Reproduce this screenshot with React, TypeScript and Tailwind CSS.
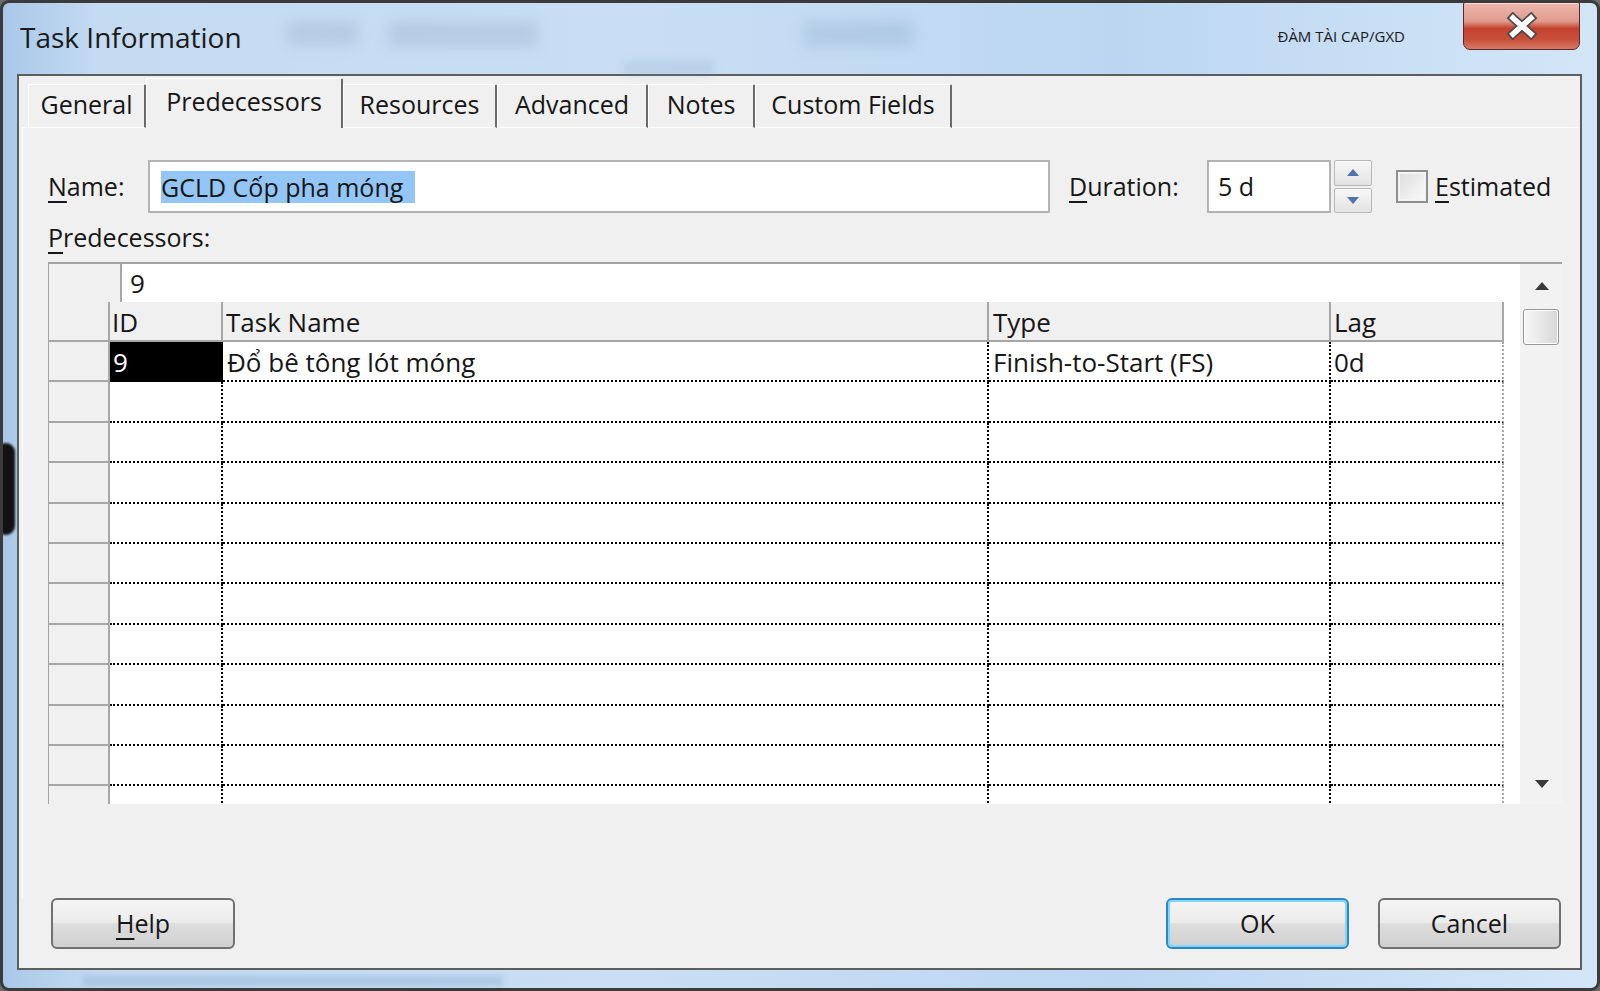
import React from 'react';

const tabs = [
  { label: 'General', cls: 'w-[118px]' },
  { label: 'Predecessors', cls: 'w-[197px]', selected: true },
  { label: 'Resources', cls: 'w-[154px]' },
  { label: 'Advanced', cls: 'w-[151px]' },
  { label: 'Notes', cls: 'w-[107px]' },
  { label: 'Custom Fields', cls: 'w-[197px]' },
];

const btnBg =
  'bg-[linear-gradient(to_bottom,#f4f4f4_0%,#ececec_48%,#dedede_50%,#d0d0d0_100%)]';

const Mn: React.FC<{ c: string }> = ({ c }) => (
  <span className="underline decoration-[2px] underline-offset-[5px]">{c}</span>
);

const Triangle: React.FC<{ up?: boolean; color: string; w?: number; h?: number }> = ({ up, color, w = 14, h = 8 }) => (
  <svg width={w} height={h} viewBox={`0 0 ${w} ${h}`}>
    <polygon points={up ? `0,${h} ${w / 2},0 ${w},${h}` : `0,0 ${w},0 ${w / 2},${h}`} fill={color} />
  </svg>
);

const DataRow: React.FC<{ id?: string; name?: string; type?: string; lag?: string }> = ({ id, name, type, lag }) => (
  <div className="flex h-[40.4px] shrink-0">
    <div className="w-[61px] bg-[#f0f0f0] border-r-2 border-b-2 border-[#a6a6a6]" />
    <div
      className={`w-[113px] pl-[3px] pt-[3px] flex items-center border-r-2 border-b-2 border-dotted border-black ${
        id ? 'bg-black text-white' : ''
      }`}
    >
      {id}
    </div>
    <div className="w-[766px] pl-[4px] pt-[3px] flex items-center border-r-2 border-b-2 border-dotted border-black">{name}</div>
    <div className="w-[342px] pl-[4px] pt-[3px] flex items-center border-r-2 border-b-2 border-dotted border-black">{type}</div>
    <div className="w-[173px] pl-[3px] pt-[3px] flex items-center border-b-2 border-dotted border-black border-r-2 border-r-[#a6a6a6] border-r-solid">
      {lag}
    </div>
  </div>
);

export default function App() {
  const emptyRows = Array.from({ length: 11 });
  return (
    <div className="w-[1600px] h-[991px] bg-[#6b6b6b] font-['Open_Sans',sans-serif] text-[#161616] overflow-hidden">
      <div className="relative w-full h-full rounded-[9px] border-[3px] border-[#3b3b3b] bg-[linear-gradient(to_right,#a9c8e8_0%,#c4dbf2_6%,#c9def4_40%,#bcd6f1_70%,#d3e6f8_100%)] flex flex-col overflow-hidden">
        {/* glass blur behind the title */}
        <div className="absolute left-[285px] top-[18px] w-[70px] h-[24px] bg-[#7f9bb8] opacity-25 blur-[7px]" />
        <div className="absolute left-[385px] top-[18px] w-[150px] h-[26px] bg-[#7f9bb8] opacity-25 blur-[7px]" />
        <div className="absolute left-[800px] top-[18px] w-[110px] h-[26px] bg-[#7f9bb8] opacity-25 blur-[7px]" />
        <div className="absolute left-[620px] top-[58px] w-[90px] h-[14px] bg-[#7f9bb8] opacity-20 blur-[5px]" />
        <div className="absolute left-[-6px] top-[440px] w-[18px] h-[92px] rounded-full bg-[#111] blur-[1px]" />
        <div className="absolute left-[80px] bottom-[2px] w-[420px] h-[10px] bg-[#8fb0d0] opacity-50 blur-[3px]" />

        {/* title bar */}
        <div className="relative h-[71px] shrink-0 flex items-start pl-[17px] pr-[17px]">
          <div className="h-[68px] flex items-center text-[28px] text-[#1a1a1a]">Task Information</div>
          <div className="flex-1" />
          <div className="h-[66px] flex items-center text-[15px] text-[#1a1a1a] mr-[58px]">ĐÀM TÀI CAP/GXD</div>
          <div className="-mt-[1px] w-[117px] h-[48px] rounded-b-[7px] rounded-t-[2px] border border-[#5a2820] bg-[linear-gradient(to_bottom,#eeb8ae_0%,#df9a8c_40%,#c4412c_55%,#c9503a_80%,#d57a68_100%)] shadow-[inset_0_1px_0_rgba(255,255,255,0.5)] flex items-center justify-center">
            <svg width="34" height="28" viewBox="0 0 34 28">
              <path d="M8 6 L26 22 M26 6 L8 22" stroke="#4a4a4a" strokeWidth="9" strokeLinecap="square" />
              <path d="M8 6 L26 22 M26 6 L8 22" stroke="#ffffff" strokeWidth="5.5" strokeLinecap="square" />
            </svg>
          </div>
        </div>

        {/* client area */}
        <div className="ml-[14px] mr-[15px] mb-[18px] flex-1 border-2 border-[#5e5e5e] bg-[#f0f0f0] flex flex-col">
          {/* tabs */}
          <div className="mt-[2px] h-[50px] flex items-end pl-[3px] text-[25px]">
            <div className="w-[6px] h-[1px] bg-white" />
            {tabs.map((t) =>
              t.selected ? (
                <div
                  key={t.label}
                  className={`${t.cls} h-[50px] border-t border-l border-white border-r-2 border-r-[#6a6a6a] rounded-tr-[2px] flex items-center justify-center pb-[4px]`}
                >
                  {t.label}
                </div>
              ) : (
                <div
                  key={t.label}
                  className={`${t.cls} h-[44px] border-t border-l border-white border-b border-b-white border-r-2 border-r-[#6a6a6a] rounded-tr-[2px] flex items-center justify-center pb-[2px]`}
                >
                  {t.label}
                </div>
              )
            )}
            <div className="flex-1 h-[1px] bg-white mr-[2px]" />
          </div>

          {/* tab page */}
          <div className="ml-[3px] flex-1 border-l border-white pl-[25px] text-[25px]">
            <div className="mt-[32px] h-[53px] flex items-center">
              <div className="w-[100px]">
                <Mn c="N" />ame:
              </div>
              <div className="w-[902px] h-[53px] border-2 border-[#b3b3b3] bg-white flex items-center pl-[11px]">
                <span className="bg-[#93c5f7] leading-[32px] pr-[12px]">GCLD Cốp pha móng</span>
              </div>
              <div className="ml-[19px] w-[138px]">
                <Mn c="D" />uration:
              </div>
              <div className="w-[124px] h-[53px] border-2 border-[#b3b3b3] bg-white flex items-center pl-[9px]">5 d</div>
              <div className="ml-[3px] w-[38px] h-[53px] flex flex-col gap-[2px]">
                <div className="flex-1 border border-[#b8b8b8] rounded-[2px] bg-[linear-gradient(to_bottom,#f7f7f7,#e3e3e3)] flex items-center justify-center">
                  <Triangle up color="#4f73ad" w={12} h={7} />
                </div>
                <div className="flex-1 border border-[#b8b8b8] rounded-[2px] bg-[linear-gradient(to_bottom,#f7f7f7,#e3e3e3)] flex items-center justify-center">
                  <Triangle color="#4f73ad" w={12} h={7} />
                </div>
              </div>
              <div className="ml-[24px] w-[32px] h-[33px] border-2 border-[#8e8e8e] bg-[linear-gradient(135deg,#dcdcdc,#fbfbfb)] shadow-[inset_0_0_0_2px_#f4f4f4]" />
              <div className="ml-[7px]">
                <Mn c="E" />stimated
              </div>
            </div>

            <div className="mt-[5px] h-[40px] flex items-center">
              <Mn c="P" />redecessors:
            </div>

            {/* grid */}
            <div className="mt-[4px] w-[1514px] h-[542px] border-t-2 border-l border-[#a3a3a3] bg-white flex overflow-hidden text-[26px]">
              <div className="w-[1471px] flex flex-col">
                <div className="h-[38px] shrink-0 flex">
                  <div className="w-[73px] bg-[#f0f0f0] border-r-2 border-[#a6a6a6]" />
                  <div className="pl-[8px] flex items-center">9</div>
                </div>
                <div className="h-[40px] shrink-0 flex">
                  <div className="w-[61px] bg-[#f0f0f0] border-r-2 border-b-2 border-[#a6a6a6]" />
                  <div className="w-[113px] pl-[2px] pt-[3px] bg-[#f0f0f0] border-r-2 border-b-2 border-[#a6a6a6] flex items-center">ID</div>
                  <div className="w-[766px] pl-[3px] pt-[3px] bg-[#f0f0f0] border-r-2 border-b-2 border-[#a6a6a6] flex items-center">Task Name</div>
                  <div className="w-[342px] pl-[4px] pt-[3px] bg-[#f0f0f0] border-r-2 border-b-2 border-[#a6a6a6] flex items-center">Type</div>
                  <div className="w-[173px] pl-[3px] pt-[3px] bg-[#f0f0f0] border-r-2 border-b-2 border-[#a6a6a6] flex items-center">Lag</div>
                </div>
                <DataRow id="9" name="Đổ bê tông lót móng" type="Finish-to-Start (FS)" lag="0d" />
                {emptyRows.map((_, i) => (
                  <DataRow key={i} />
                ))}
              </div>
              <div className="w-[42px] bg-[#f2f2f2] flex flex-col items-center">
                <div className="h-[44px] flex items-center justify-center pl-[2px]">
                  <Triangle up color="#3a3a3a" w={14} h={8} />
                </div>
                <div className="mt-[1px] w-[36px] h-[36px] rounded-[3px] border border-[#979797] bg-[linear-gradient(to_right,#f6f6f6,#e8e8e8_50%,#d6d6d6)] shadow-[inset_0_0_0_1px_#ffffff]" />
                <div className="flex-1" />
                <div className="h-[40px] flex items-center justify-center pl-[2px]">
                  <Triangle color="#3a3a3a" w={14} h={8} />
                </div>
              </div>
            </div>
          </div>

          {/* buttons */}
          <div className="h-[51px] mb-[19px] flex items-center pl-[32px] pr-[19px] text-[25px]">
            <button className={`w-[184px] h-[51px] rounded-[6px] border-2 border-[#707070] ${btnBg} flex items-center justify-center`}>
              <span>
                <Mn c="H" />elp
              </span>
            </button>
            <div className="flex-1" />
            <button className={`w-[183px] h-[51px] rounded-[6px] border-2 border-[#2f86c4] shadow-[inset_0_0_0_2px_#7fd6f7] ${btnBg} flex items-center justify-center`}>
              OK
            </button>
            <button className={`ml-[29px] w-[183px] h-[51px] rounded-[6px] border-2 border-[#707070] ${btnBg} flex items-center justify-center`}>
              Cancel
            </button>
          </div>
        </div>
      </div>
    </div>
  );
}
